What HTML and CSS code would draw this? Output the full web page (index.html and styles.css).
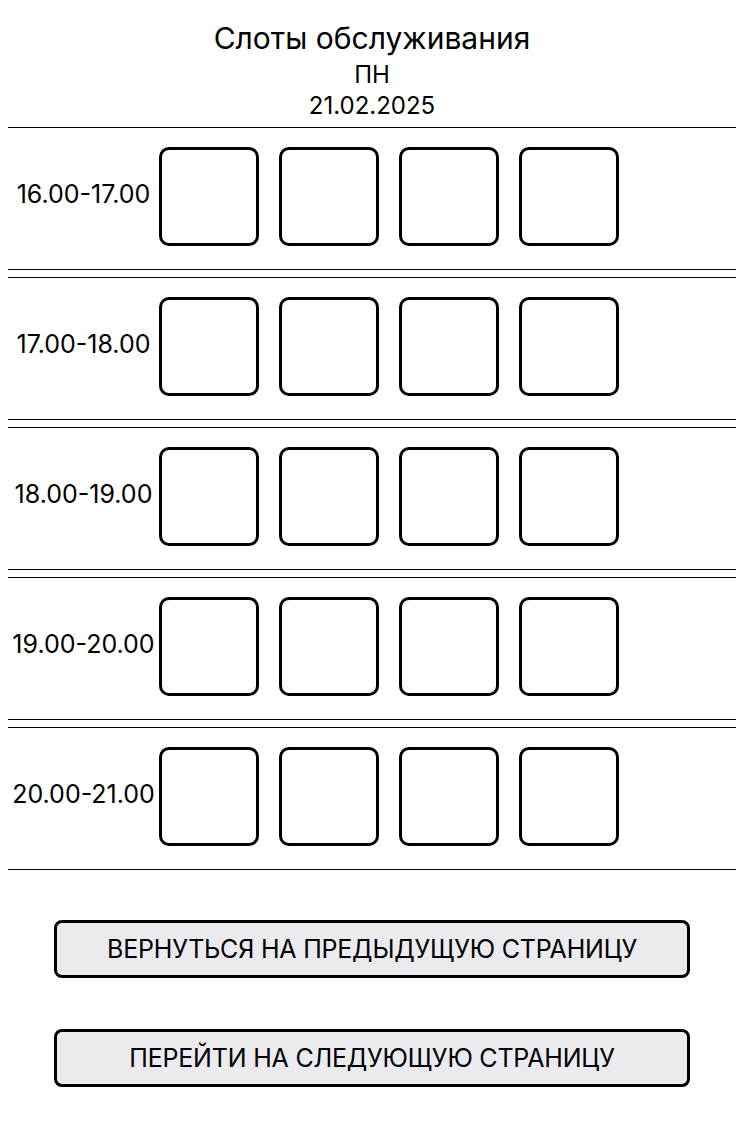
FILE: index.html
```html
<!DOCTYPE html>
<html lang="ru">
<head>
    <meta charset="UTF-8">
    <meta name="viewport" content="width=device-width, initial-scale=1.0">
    <title>Слоты обслуживания</title>
    <link rel="stylesheet" href="styles.css">
</head>
<body>
    <div class="header">
        <h1>Слоты обслуживания</h1>
        <div class="day">ПН</div>
        <div class="date">21.02.2025</div>
    </div>

    <div class="slots">
        <div class="slot-row">
            <div class="slot-time">16.00-17.00</div>
            <div class="slot-box"></div>
            <div class="slot-box"></div>
            <div class="slot-box"></div>
            <div class="slot-box"></div>
        </div>
        <div class="slot-row">
            <div class="slot-time">17.00-18.00</div>
            <div class="slot-box"></div>
            <div class="slot-box"></div>
            <div class="slot-box"></div>
            <div class="slot-box"></div>
        </div>
        <div class="slot-row">
            <div class="slot-time">18.00-19.00</div>
            <div class="slot-box"></div>
            <div class="slot-box"></div>
            <div class="slot-box"></div>
            <div class="slot-box"></div>
        </div>
        <div class="slot-row">
            <div class="slot-time">19.00-20.00</div>
            <div class="slot-box"></div>
            <div class="slot-box"></div>
            <div class="slot-box"></div>
            <div class="slot-box"></div>
        </div>
        <div class="slot-row">
            <div class="slot-time">20.00-21.00</div>
            <div class="slot-box"></div>
            <div class="slot-box"></div>
            <div class="slot-box"></div>
            <div class="slot-box"></div>
        </div>
    </div>

    <div class="nav">
        <button class="nav-button">ВЕРНУТЬСЯ НА ПРЕДЫДУЩУЮ СТРАНИЦУ</button>
        <button class="nav-button">ПЕРЕЙТИ НА СЛЕДУЮЩУЮ СТРАНИЦУ</button>
    </div>
</body>
</html>
```

FILE: styles.css
```css
body {
    font-family: Inter, "Noto Sans", sans-serif;
    margin: 8px;
    background-color: #fff;
    color: #000;
}

.header {
    text-align: center;
    padding-top: 10px;
    padding-bottom: 7px;
}

h1 {
    margin: 0;
    font-size: 30px;
    font-weight: 400;
    line-height: 40px;
}

.day {
    font-size: 24px;
    line-height: 34px;
}

.date {
    font-size: 24px;
    line-height: 28px;
}

.slot-row {
    display: flex;
    align-items: center;
    border-top: 1px solid #000;
    border-bottom: 1px solid #000;
    padding: 19px 0 23px;
    margin-bottom: 7px;
}

.slot-row:last-child {
    margin-bottom: 0;
}

.slot-time {
    width: 151px;
    padding-bottom: 6px;
    text-align: center;
    font-size: 25px;
}

.slot-box {
    width: 94px;
    height: 93px;
    border: 3px solid #000;
    border-radius: 10px;
    margin-right: 20px;
}

.nav {
    display: flex;
    flex-direction: column;
    align-items: center;
    gap: 51px;
    margin-top: 50px;
}

.nav-button {
    width: 636px;
    height: 58px;
    background-color: #ebebef;
    border: 3px solid #000;
    border-radius: 8px;
    font-family: Inter, "Noto Sans", sans-serif;
    font-size: 25px;
    letter-spacing: -0.2px;
    color: #000;
    cursor: pointer;
}
```
